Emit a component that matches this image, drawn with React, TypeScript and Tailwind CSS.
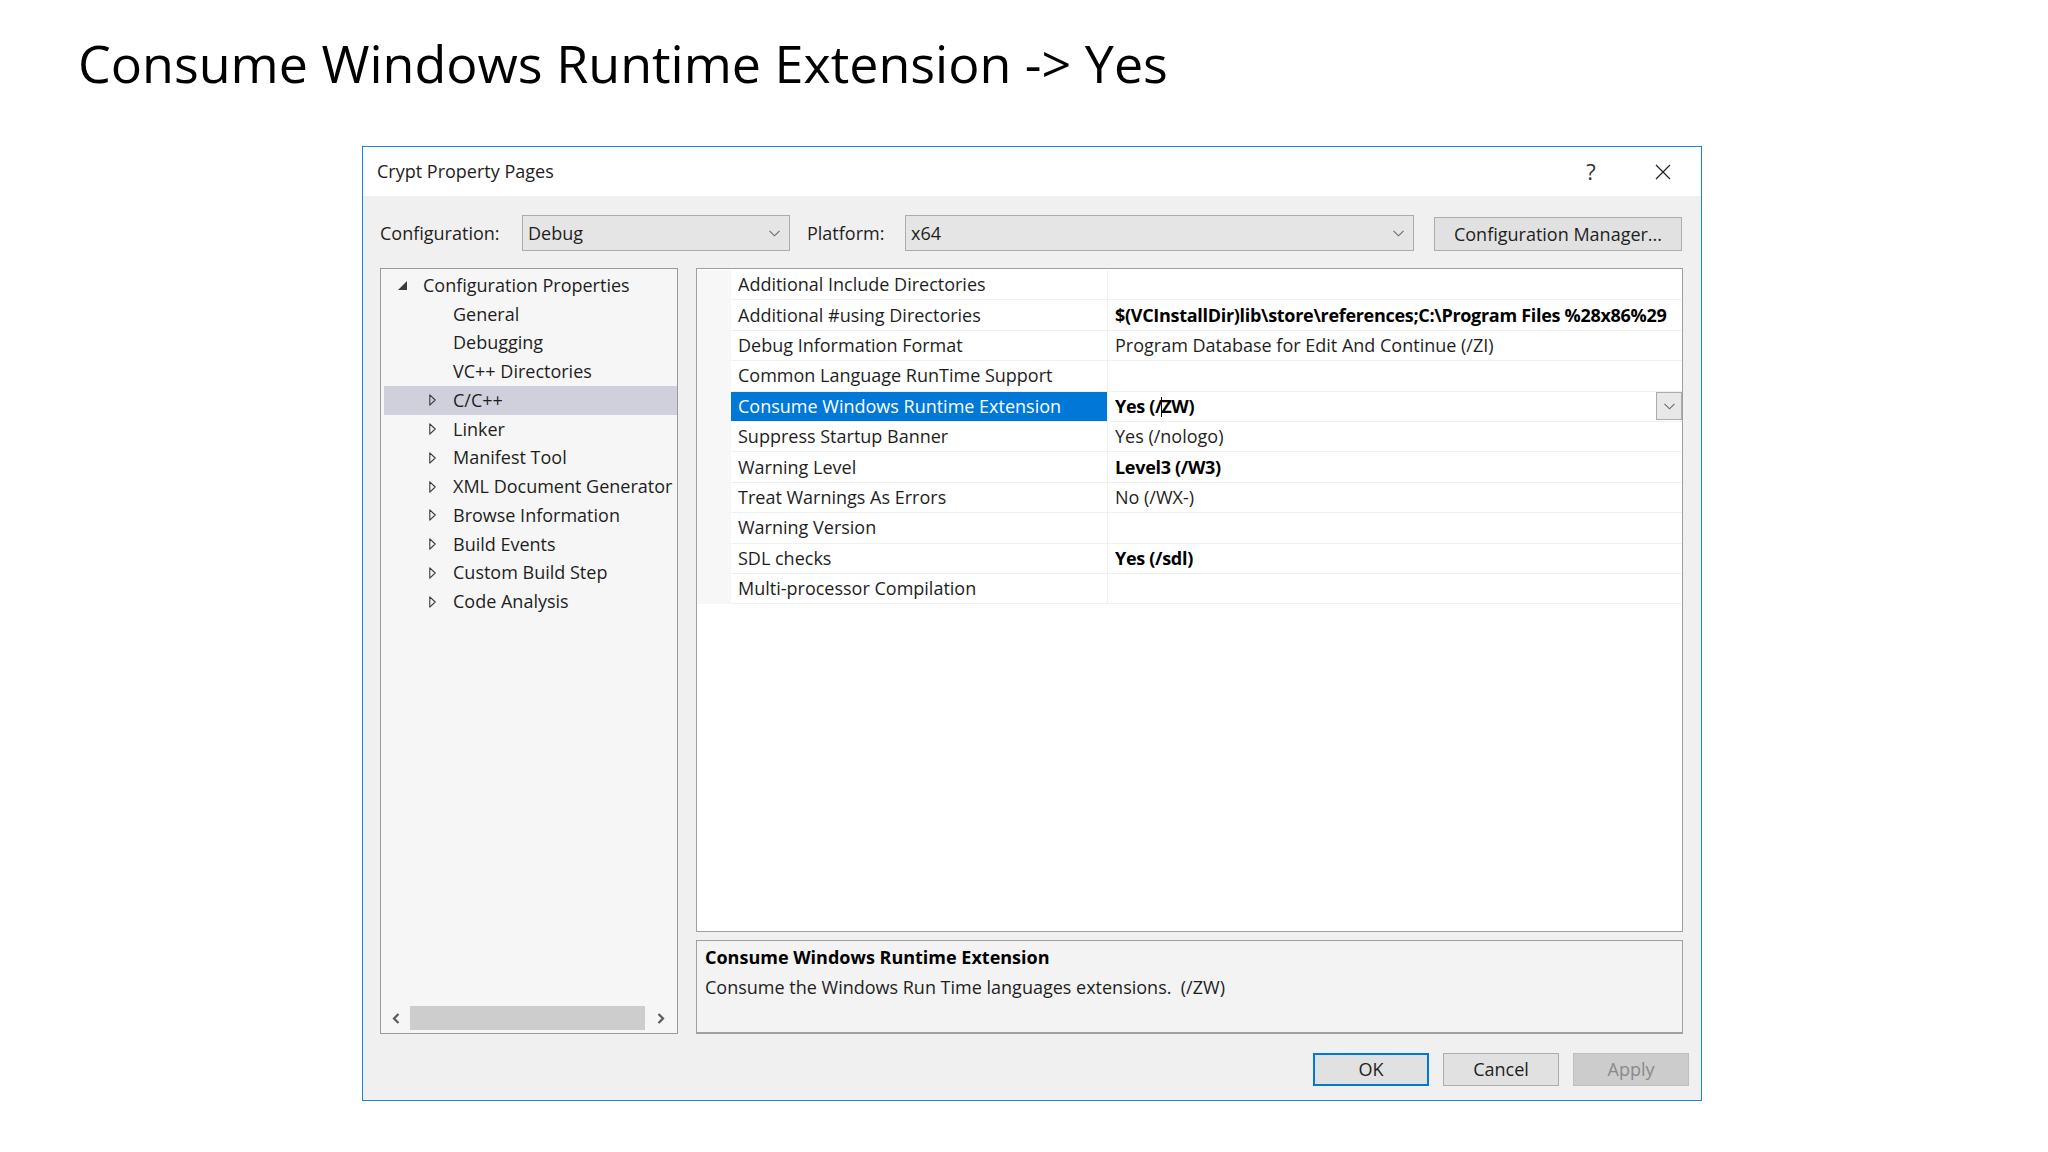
import { ReactNode } from "react"

const tree = [
  { label: "General", arrow: false },
  { label: "Debugging", arrow: false },
  { label: "VC++ Directories", arrow: false },
  { label: "C/C++", arrow: true, selected: true },
  { label: "Linker", arrow: true },
  { label: "Manifest Tool", arrow: true },
  { label: "XML Document Generator", arrow: true },
  { label: "Browse Information", arrow: true },
  { label: "Build Events", arrow: true },
  { label: "Custom Build Step", arrow: true },
  { label: "Code Analysis", arrow: true },
]

const props: { name: string; value?: ReactNode; bold?: boolean; selected?: boolean }[] = [
  { name: "Additional Include Directories" },
  {
    name: "Additional #using Directories",
    value: "$(VCInstallDir)lib\\store\\references;C:\\Program Files %28x86%29",
    bold: true,
  },
  { name: "Debug Information Format", value: "Program Database for Edit And Continue (/ZI)" },
  { name: "Common Language RunTime Support" },
  {
    name: "Consume Windows Runtime Extension",
    value: (
      <>
        Yes (/<span className="inline-block h-[20px] w-px -mx-px bg-black align-[-4px]" />ZW)
      </>
    ),
    bold: true,
    selected: true,
  },
  { name: "Suppress Startup Banner", value: "Yes (/nologo)" },
  { name: "Warning Level", value: "Level3 (/W3)", bold: true },
  { name: "Treat Warnings As Errors", value: "No (/WX-)" },
  { name: "Warning Version" },
  { name: "SDL checks", value: "Yes (/sdl)", bold: true },
  { name: "Multi-processor Compilation" },
]

function Chevron() {
  return (
    <svg width="11" height="7" viewBox="0 0 11 7" fill="none">
      <path d="M0.5 0.8 L5.5 5.8 L10.5 0.8" stroke="#6a6a6a" strokeWidth="1.1" />
    </svg>
  )
}

function Dropdown({ text, width }: { text: string; width: string }) {
  return (
    <div className={`${width} flex h-[36px] items-center justify-between border border-[#acacac] bg-[#e5e5e5] pl-[5px] pr-[9px]`}>
      <span>{text}</span>
      <Chevron />
    </div>
  )
}

function TreeRow({ label, arrow, selected }: { label: string; arrow: boolean; selected?: boolean }) {
  return (
    <div className={`mx-[3px] -mr-[1px] flex h-[28.75px] items-center pl-[45px] ${selected ? "bg-[#cfd0dc]" : ""}`}>
      <div className="flex w-[24px] items-center">
        {arrow && (
          <svg width="7" height="12" viewBox="0 0 7 12" fill="none">
            <path d="M0.8 0.8 L6.2 6 L0.8 11.2 Z" stroke="#3a3a3a" strokeWidth="1.1" strokeLinejoin="round" />
          </svg>
        )}
      </div>
      <span className="whitespace-nowrap">{label}</span>
    </div>
  )
}

export default function App() {
  return (
    <div className="relative h-[1152px] w-[2048px] overflow-hidden bg-white font-['Open_Sans',sans-serif] text-black">
      <h1 className="pl-[78px] pt-[37px] text-[52px] leading-[52px] font-normal">
        Consume Windows Runtime Extension -&gt; Yes
      </h1>

      <div className="ml-[362px] mt-[57px] flex h-[955px] w-[1340px] flex-col border border-[#1883d7] text-[18px] text-[#1e1e1e]">
        {/* title bar */}
        <div className="flex h-[49px] shrink-0 items-center bg-white pl-[14px] pr-[26px]">
          <span className="text-[#222]">Crypt Property Pages</span>
          <span className="ml-auto flex w-[24px] justify-center text-[22px] text-[#333]">?</span>
          <span className="ml-[48px] flex w-[24px] justify-center">
            <svg width="16" height="16" viewBox="0 0 16 16" fill="none">
              <path d="M1 1 L15 15 M15 1 L1 15" stroke="#222" strokeWidth="1.2" />
            </svg>
          </span>
        </div>

        {/* body */}
        <div className="flex flex-1 flex-col bg-[#f0f0f0] pl-[17px] pr-[18px]">
          <div className="mt-[19px] flex h-[36px] items-start">
            <span className="flex h-[36px] w-[142px] items-center">Configuration:</span>
            <Dropdown text="Debug" width="w-[268px]" />
            <span className="ml-[17px] flex h-[36px] w-[98px] items-center">Platform:</span>
            <Dropdown text="x64" width="w-[509px]" />
            <button className="ml-[20px] mt-[2px] flex h-[34px] w-[248px] items-center justify-center border border-[#adadad] bg-[#e1e1e1]">
              Configuration Manager...
            </button>
          </div>

          <div className="mt-[17px] flex h-[766px] gap-[18px]">
            {/* tree */}
            <div className="flex w-[298px] flex-col border border-[#9a9a9a] bg-[#f6f6f6] pb-[1px]">
              <div className="flex-1 overflow-hidden pt-[2px]">
                <div className="mx-[3px] flex h-[28.75px] items-center pl-[14px]">
                  <div className="flex w-[25px] items-center">
                    <svg width="9" height="9" viewBox="0 0 9 9">
                      <polygon points="9,0 9,9 0,9" fill="#3c3c3c" />
                    </svg>
                  </div>
                  <span className="whitespace-nowrap">Configuration Properties</span>
                </div>
                {tree.map((t) => (
                  <TreeRow key={t.label} label={t.label} arrow={t.arrow} selected={t.selected} />
                ))}
              </div>
              <div className="flex h-[28px] items-center">
                <div className="flex w-[29px] justify-center">
                  <svg width="8" height="11" viewBox="0 0 8 11">
                    <path d="M6.5 1 L2 5.5 L6.5 10" stroke="#5a5a5a" strokeWidth="2.2" fill="none" />
                  </svg>
                </div>
                <div className="h-[24px] w-[235px] bg-[#cdcdcd]" />
                <div className="flex flex-1 justify-center">
                  <svg width="8" height="11" viewBox="0 0 8 11">
                    <path d="M1.5 1 L6 5.5 L1.5 10" stroke="#5a5a5a" strokeWidth="2.2" fill="none" />
                  </svg>
                </div>
              </div>
            </div>

            {/* grid + description */}
            <div className="flex w-[987px] flex-col gap-[8px]">
              <div className="h-[664px] overflow-hidden border border-[#a0a0a0] bg-white pt-[1px]">
                {props.map((p) => (
                  <div key={p.name} className="flex h-[30.4px]">
                    <div className="w-[34px] shrink-0 bg-[#f7f7f7]" />
                    <div
                      className={`flex w-[377px] shrink-0 items-center whitespace-nowrap border-b border-r border-[#f0f0f0] pl-[7px] ${
                        p.selected ? "bg-[#0078d7] text-white" : ""
                      }`}
                    >
                      {p.name}
                    </div>
                    <div className="flex min-w-0 flex-1 items-center border-b border-[#f0f0f0] pl-[7px]">
                      <span className={`flex-1 overflow-hidden whitespace-nowrap ${p.bold ? "font-bold tracking-[-0.3px] text-black" : ""}`}>
                        {p.value}
                      </span>
                      {p.selected && (
                        <div className="flex h-[28px] w-[26px] shrink-0 items-center justify-center border border-[#acacac] bg-[#e8e8e8]">
                          <Chevron />
                        </div>
                      )}
                    </div>
                  </div>
                ))}
              </div>
              <div className="h-[94px] border border-b-2 border-[#a0a0a0] bg-[#f3f3f3] pl-[8px] pt-[1px] leading-[30px]">
                <div className="font-bold text-black">Consume Windows Runtime Extension</div>
                <div className="whitespace-pre">Consume the Windows Run Time languages extensions.  (/ZW)</div>
              </div>
            </div>
          </div>

          <div className="-mr-[6px] mt-[19px] flex justify-end gap-[14px]">
            <button className="h-[33px] w-[116px] border-2 border-[#0078d7] bg-[#e1e1e1]">OK</button>
            <button className="h-[33px] w-[116px] border border-[#adadad] bg-[#e1e1e1]">Cancel</button>
            <button className="h-[33px] w-[116px] border border-[#bfbfbf] bg-[#cccccc] text-[#8a8a8a]">Apply</button>
          </div>
        </div>
      </div>
    </div>
  )
}
